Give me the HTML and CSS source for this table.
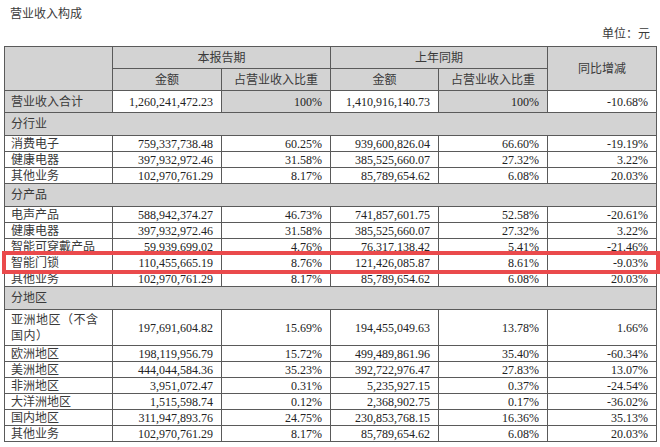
FILE: index.html
```html
<!DOCTYPE html>
<html lang="zh-CN">
<head>
<meta charset="utf-8">
<title>营业收入构成</title>
<link rel="stylesheet" href="styles.css">
</head>
<body>
<div class="page">
  <div class="title">营业收入构成</div>
  <div class="unit">单位：元</div>
  <table class="rev">
    <colgroup>
      <col class="c1"><col class="c2"><col class="c3"><col class="c4"><col class="c5"><col class="c6">
    </colgroup>
    <tr class="hd">
      <td class="g" rowspan="2"></td>
      <td class="g ctr" colspan="2">本报告期</td>
      <td class="g ctr" colspan="2">上年同期</td>
      <td class="g ctr" rowspan="2">同比增减</td>
    </tr>
    <tr class="hd">
      <td class="g ctr">金额</td>
      <td class="g ctr">占营业收入比重</td>
      <td class="g ctr">金额</td>
      <td class="g ctr">占营业收入比重</td>
    </tr>
    <tr class="hd">
      <td class="g lbl">营业收入合计</td>
      <td class="num">1,260,241,472.23</td>
      <td class="g num">100%</td>
      <td class="num">1,410,916,140.73</td>
      <td class="g num">100%</td>
      <td class="num">-10.68%</td>
    </tr>
    <tr class="sec"><td class="g lbl" colspan="6">分行业</td></tr>
    <tr class="row"><td class="lbl">消费电子</td><td class="num">759,337,738.48</td><td class="num">60.25%</td><td class="num">939,600,826.04</td><td class="num">66.60%</td><td class="num">-19.19%</td></tr>
    <tr class="row"><td class="lbl">健康电器</td><td class="num">397,932,972.46</td><td class="num">31.58%</td><td class="num">385,525,660.07</td><td class="num">27.32%</td><td class="num">3.22%</td></tr>
    <tr class="row"><td class="lbl">其他业务</td><td class="num">102,970,761.29</td><td class="num">8.17%</td><td class="num">85,789,654.62</td><td class="num">6.08%</td><td class="num">20.03%</td></tr>
    <tr class="sec"><td class="g lbl" colspan="6">分产品</td></tr>
    <tr class="row"><td class="lbl">电声产品</td><td class="num">588,942,374.27</td><td class="num">46.73%</td><td class="num">741,857,601.75</td><td class="num">52.58%</td><td class="num">-20.61%</td></tr>
    <tr class="row"><td class="lbl">健康电器</td><td class="num">397,932,972.46</td><td class="num">31.58%</td><td class="num">385,525,660.07</td><td class="num">27.32%</td><td class="num">3.22%</td></tr>
    <tr class="row"><td class="lbl">智能可穿戴产品</td><td class="num">59,939,699.02</td><td class="num">4.76%</td><td class="num">76,317,138.42</td><td class="num">5.41%</td><td class="num">-21.46%</td></tr>
    <tr class="row"><td class="lbl">智能门锁</td><td class="num">110,455,665.19</td><td class="num">8.76%</td><td class="num">121,426,085.87</td><td class="num">8.61%</td><td class="num">-9.03%</td></tr>
    <tr class="row"><td class="lbl">其他业务</td><td class="num">102,970,761.29</td><td class="num">8.17%</td><td class="num">85,789,654.62</td><td class="num">6.08%</td><td class="num">20.03%</td></tr>
    <tr class="sec"><td class="g lbl" colspan="6">分地区</td></tr>
    <tr class="tall"><td class="lbl wrap">亚洲地区（不含<br>国内）</td><td class="num">197,691,604.82</td><td class="num">15.69%</td><td class="num">194,455,049.63</td><td class="num">13.78%</td><td class="num">1.66%</td></tr>
    <tr class="row"><td class="lbl">欧洲地区</td><td class="num">198,119,956.79</td><td class="num">15.72%</td><td class="num">499,489,861.96</td><td class="num">35.40%</td><td class="num">-60.34%</td></tr>
    <tr class="row"><td class="lbl">美洲地区</td><td class="num">444,044,584.36</td><td class="num">35.23%</td><td class="num">392,722,976.47</td><td class="num">27.83%</td><td class="num">13.07%</td></tr>
    <tr class="row"><td class="lbl">非洲地区</td><td class="num">3,951,072.47</td><td class="num">0.31%</td><td class="num">5,235,927.15</td><td class="num">0.37%</td><td class="num">-24.54%</td></tr>
    <tr class="row"><td class="lbl">大洋洲地区</td><td class="num">1,515,598.74</td><td class="num">0.12%</td><td class="num">2,368,902.75</td><td class="num">0.17%</td><td class="num">-36.02%</td></tr>
    <tr class="row"><td class="lbl">国内地区</td><td class="num">311,947,893.76</td><td class="num">24.75%</td><td class="num">230,853,768.15</td><td class="num">16.36%</td><td class="num">35.13%</td></tr>
    <tr class="row"><td class="lbl">其他业务</td><td class="num">102,970,761.29</td><td class="num">8.17%</td><td class="num">85,789,654.62</td><td class="num">6.08%</td><td class="num">20.03%</td></tr>
  </table>
  <div class="highlight"></div>
</div>
</body>
</html>
```

FILE: styles.css
```css
html, body {
  margin: 0;
  padding: 0;
  background: #ffffff;
}
.page {
  position: relative;
  width: 660px;
  height: 447px;
  overflow: hidden;
  font-family: "Liberation Serif", "Noto Sans CJK SC", serif;
  font-size: 12px;
  color: #222;
}
.title {
  padding: 6px 0 0 10px;
  height: 18px;
  line-height: 16px;
  color: #3a3a3a;
}
.unit {
  text-align: right;
  padding-right: 10px;
  height: 22px;
  line-height: 20px;
  color: #3a3a3a;
}
.rev {
  margin-left: 4px;
  width: 652px;
  border-collapse: collapse;
  table-layout: fixed;
}
.c1 { width: 108px; }
.c2 { width: 109px; }
.c3 { width: 109px; }
.c4 { width: 108px; }
.c5 { width: 109px; }
.c6 { width: 109px; }
.rev td {
  border: 1px solid #5a5a5a;
  padding: 0;
  line-height: 14px;
  white-space: nowrap;
  overflow: hidden;
}
.rev .hd td { height: 21px; }
.rev .sec td { height: 22px; }
.rev .row td { height: 15px; }
.rev .tall td { height: 35px; }
.rev td.g { background: #d3d3d3; }
.rev td.ctr { text-align: center; color: #3a3a3a; }
.rev td.lbl { text-align: left; padding-left: 6px; color: #3a3a3a; }
.rev td.num { text-align: right; padding-right: 8px; }
.rev td.wrap { white-space: nowrap; line-height: 16px; letter-spacing: 0.5px; }
.highlight {
  position: absolute;
  left: 2px;
  top: 251px;
  width: 650px;
  height: 15px;
  border: 4px solid #ea4a4c;
}
```
